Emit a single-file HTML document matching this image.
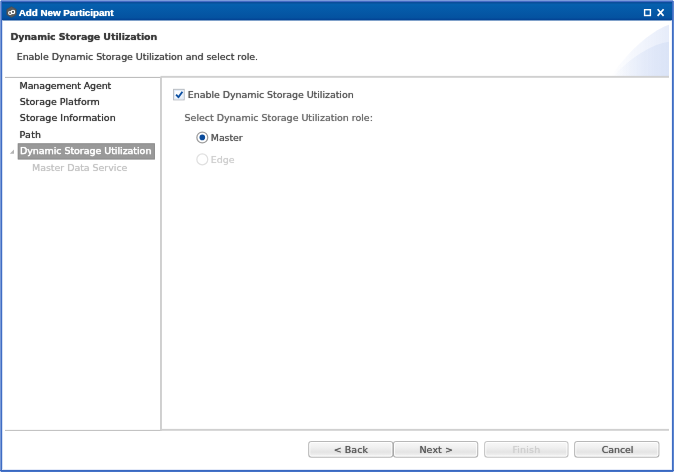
<!DOCTYPE html>
<html>
<head>
<meta charset="utf-8">
<title>Add New Participant</title>
<style>
html,body{margin:0;padding:0;background:#fff;}
body{width:674px;height:472px;position:relative;overflow:hidden;font-family:"DejaVu Sans","Liberation Sans",sans-serif;font-size:9.4px;color:#3a3a3a;}
.abs{position:absolute;}
.t{position:absolute;white-space:nowrap;line-height:12px;height:12px;-webkit-text-stroke:0;text-shadow:0 0 0.8px currentColor;}
#win{position:absolute;left:0;top:0;width:674px;height:472px;will-change:transform;}
#shapes{position:absolute;left:0;top:0;}
</style>
</head>
<body>
<div id="win">
<svg id="shapes" width="674" height="472" viewBox="0 0 674 472">
  <defs>
    <linearGradient id="tb" x1="0" y1="0" x2="0" y2="1">
      <stop offset="0" stop-color="#0a4f9a"/>
      <stop offset="0.05" stop-color="#0a4f9a"/>
      <stop offset="0.12" stop-color="#0560ae"/>
      <stop offset="0.86" stop-color="#0452a0"/>
      <stop offset="0.93" stop-color="#034596"/>
      <stop offset="1" stop-color="#034596"/>
    </linearGradient>
    <linearGradient id="g1" x1="0" y1="0" x2="1" y2="0">
      <stop offset="0" stop-color="#e6ecfa" stop-opacity="0"/>
      <stop offset="1" stop-color="#e6ecfa" stop-opacity="1"/>
    </linearGradient>
    <linearGradient id="g2" x1="0" y1="0" x2="1" y2="0">
      <stop offset="0" stop-color="#dbe4f7" stop-opacity="0"/>
      <stop offset="1" stop-color="#dbe4f7" stop-opacity="1"/>
    </linearGradient>
    <linearGradient id="bg" x1="0" y1="0" x2="0" y2="1">
      <stop offset="0" stop-color="#f8f8f8"/>
      <stop offset="0.35" stop-color="#f1f1f1"/>
      <stop offset="0.68" stop-color="#e4e4e4"/>
      <stop offset="0.9" stop-color="#f0f0f0"/>
      <stop offset="1" stop-color="#f4f4f4"/>
    </linearGradient>
    <linearGradient id="cb" x1="0" y1="0" x2="1" y2="1">
      <stop offset="0.2" stop-color="#ffffff"/>
      <stop offset="1" stop-color="#e6eefa"/>
    </linearGradient>
  </defs>
  <!-- title bar -->
  <rect x="0" y="2" width="674" height="18.5" fill="url(#tb)"/>
  <!-- window border -->
  <rect x="0" y="0" width="674" height="1" fill="#7b9bdb"/>
  <rect x="0" y="1" width="674" height="1" fill="#4169c4"/>
  <rect x="0" y="0" width="1" height="472" fill="#7a9ad8"/>
  <rect x="1" y="1" width="1" height="471" fill="#3f6dc4"/>
  <rect x="2" y="20.6" width="1" height="449.4" fill="#d4dff3"/>
  <rect x="673" y="0" width="1" height="472" fill="#5d86cf"/>
  <rect x="672" y="1" width="1" height="471" fill="#3f6dc4"/>
  <rect x="671" y="20.6" width="1" height="449.4" fill="#eef2fb"/>
  <rect x="2" y="469" width="670" height="1" fill="#e4eaf8"/>
  <rect x="0" y="470" width="674" height="1" fill="#3a68c0"/>
  <rect x="0" y="471" width="674" height="1" fill="#4472c8"/>

  <rect x="0" y="0" width="1" height="1" fill="#e8eefa"/>
  <rect x="673" y="0" width="1" height="1" fill="#e8eefa"/>
  <rect x="0" y="471" width="1" height="1" fill="#b8c8ea"/>
  <rect x="673" y="471" width="1" height="1" fill="#b8c8ea"/>
  <!-- title icon -->
  <g transform="translate(5.3,5.3) scale(1,0.96)">
    <polygon points="6.2,1.4 10.9,4.1 10.9,9.9 6.2,12.6 1.5,9.9 1.5,4.1" fill="#5a5a5a" stroke="#4a4a4a" stroke-width="0.6"/>
    <circle cx="4.8" cy="8.0" r="1.5" fill="none" stroke="#fff" stroke-width="1.1"/>
    <circle cx="7.7" cy="6.9" r="1.7" fill="none" stroke="#fff" stroke-width="1.2"/>
  </g>
  <!-- window buttons -->
  <rect x="644.6" y="9.7" width="5.8" height="5.8" fill="none" stroke="#fff" stroke-width="1.4"/>
  <path d="M657.6 9.3 L663.6 15.9 M663.6 9.3 L657.6 15.9" stroke="#fff" stroke-width="1.7" fill="none"/>

  <!-- header decoration -->
  <path d="M669 24.8 C655 29 630 48 610.5 77 L669 77 Z" fill="url(#g1)"/>
  <path d="M669 41.7 C652 44 632 56 612.5 77 L669 77 Z" fill="url(#g2)"/>

  <!-- separators -->
  <rect x="5" y="76.9" width="155.5" height="1" fill="#b6b6b6"/>
  <rect x="160.5" y="75.9" width="508.5" height="1.9" fill="#d0d0d0"/>
  <rect x="160.05" y="76.9" width="1.85" height="354" fill="#cdcdcd"/>
  <rect x="5" y="429.9" width="155.5" height="1" fill="#bdbdbd"/>
  <rect x="160.5" y="428.9" width="508.5" height="1.9" fill="#d0d0d0"/>

  <!-- tree selection -->
  <rect x="17.8" y="143.4" width="137.1" height="16" fill="#999"/>
  <rect x="18.3" y="143.9" width="136.1" height="15" fill="none" stroke="#8e8e8e" stroke-width="1"/>
  <polygon points="14,149.6 14,153.8 9.8,153.8" fill="#b4b4b4"/>

  <!-- checkbox -->
  <rect x="173.65" y="89.35" width="10.5" height="10.5" fill="#fff" stroke="#b1b5ba" stroke-width="1"/>
  <rect x="174.65" y="90.35" width="8.5" height="8.5" fill="url(#cb)" stroke="#dfe9f7" stroke-width="1"/>
  <path d="M176.1 94.7 L178.4 97.2 L182.4 91.7" fill="none" stroke="#0d50a2" stroke-width="1.9" stroke-linejoin="round"/>

  <!-- radios -->
  <circle cx="202.3" cy="137.5" r="5.45" fill="#fff" stroke="#9b9b9b" stroke-width="1.25"/>
  <circle cx="202.3" cy="137.4" r="2.8" fill="#0b4c9c"/>
  <circle cx="202.3" cy="159.4" r="5.45" fill="#fff" stroke="#e0e0e0" stroke-width="1.25"/>

  <!-- buttons -->
  <g>
    <rect x="308.75" y="441.5" width="84.10" height="15.65" rx="2.6" fill="url(#bg)" stroke="#000" stroke-opacity="0.27" stroke-width="1.15"/>
    <rect x="309.8" y="442.55" width="82.00" height="13.55" rx="1.6" fill="none" stroke="#fff" stroke-opacity="0.85" stroke-width="1"/>
    <rect x="393.45" y="441.5" width="84.25" height="15.65" rx="2.6" fill="url(#bg)" stroke="#000" stroke-opacity="0.27" stroke-width="1.15"/>
    <rect x="394.5" y="442.55" width="82.15" height="13.55" rx="1.6" fill="none" stroke="#fff" stroke-opacity="0.85" stroke-width="1"/>
    <rect x="484.7" y="441.5" width="83.30" height="15.65" rx="2.6" fill="url(#bg)" stroke="#000" stroke-opacity="0.22" stroke-width="1.15"/>
    <rect x="485.75" y="442.55" width="81.20" height="13.55" rx="1.6" fill="none" stroke="#fff" stroke-opacity="0.85" stroke-width="1"/>
    <rect x="574.7" y="441.5" width="84.20" height="15.65" rx="2.6" fill="url(#bg)" stroke="#000" stroke-opacity="0.27" stroke-width="1.15"/>
    <rect x="575.75" y="442.55" width="82.10" height="13.55" rx="1.6" fill="none" stroke="#fff" stroke-opacity="0.85" stroke-width="1"/>
  </g>
</svg>

  <div class="t" id="title" style="left:18.70px;top:6.77px;font-size:9.9px;color:#fff;letter-spacing:-0.060px;font-weight:bold;font-family:'Liberation Sans','DejaVu Sans',sans-serif;-webkit-text-stroke:0.1px #fff;">Add New Participant</div>
  <div class="t" id="hd1" style="left:10.40px;top:30.91px;font-size:9.5px;color:#3c3c3c;letter-spacing:-0.120px;font-weight:bold;">Dynamic Storage Utilization</div>
  <div class="t" id="hd2" style="left:16.69px;top:50.91px;font-size:9.5px;color:#484848;letter-spacing:-0.057px;">Enable Dynamic Storage Utilization and select role.</div>
  <div class="t" id="tr1" style="left:19.58px;top:79.91px;font-size:9.5px;color:#363636;letter-spacing:-0.133px;">Management Agent</div>
  <div class="t" id="tr2" style="left:19.85px;top:95.91px;font-size:9.5px;color:#363636;letter-spacing:-0.028px;">Storage Platform</div>
  <div class="t" id="tr3" style="left:19.87px;top:111.91px;font-size:9.5px;color:#363636;letter-spacing:0.035px;">Storage Information</div>
  <div class="t" id="tr4" style="left:19.57px;top:128.91px;font-size:9.5px;color:#363636;letter-spacing:0.223px;">Path</div>
  <div class="t" id="tr5" style="left:19.90px;top:144.91px;font-size:9.5px;color:#fff;letter-spacing:-0.046px;-webkit-text-stroke:0.25px #fff;">Dynamic Storage Utilization</div>
  <div class="t" id="tr6" style="left:32.02px;top:161.91px;font-size:9.5px;color:#c4c4c4;letter-spacing:-0.049px;">Master Data Service</div>
  <div class="t" id="chk" style="left:187.82px;top:88.91px;font-size:9.5px;color:#585858;letter-spacing:-0.068px;">Enable Dynamic Storage Utilization</div>
  <div class="t" id="sel" style="left:184.57px;top:111.91px;font-size:9.5px;color:#6c6c6c;letter-spacing:-0.024px;">Select Dynamic Storage Utilization role:</div>
  <div class="t" id="mas" style="left:210.82px;top:131.91px;font-size:9.5px;color:#585858;letter-spacing:-0.128px;">Master</div>
  <div class="t" id="edg" style="left:210.87px;top:153.91px;font-size:9.5px;color:#cfcfcf;letter-spacing:-0.078px;">Edge</div>
  <div class="t" id="bk" style="left:333.83px;top:443.91px;font-size:9.5px;color:#585858;letter-spacing:0.008px;">&lt; Back</div>
  <div class="t" id="nx" style="left:419.42px;top:443.91px;font-size:9.5px;color:#585858;letter-spacing:0.094px;">Next &gt;</div>
  <div class="t" id="fi" style="left:512.42px;top:443.91px;font-size:9.5px;color:#cfcfcf;letter-spacing:0.144px;">Finish</div>
  <div class="t" id="ca" style="left:601.72px;top:443.91px;font-size:9.5px;color:#585858;letter-spacing:-0.081px;">Cancel</div>
</div>
</body>
</html>
